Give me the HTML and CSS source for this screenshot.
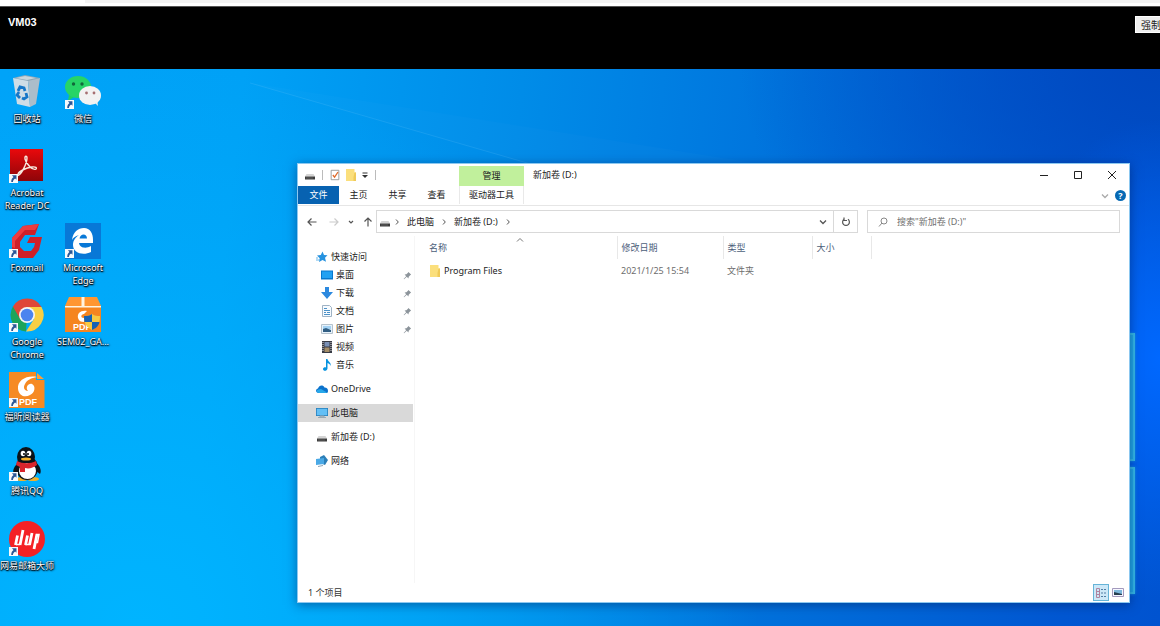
FILE: index.html
```html
<!DOCTYPE html>
<html lang="zh-CN">
<head>
    <meta charset="UTF-8">
    <meta name="viewport" content="width=device-width, initial-scale=1.0">
    <title>VM03</title>
    <link rel="stylesheet" href="styles.css">
</head>
<body>
    <!-- Shared icons -->
    <svg class="sprite" aria-hidden="true">
        <symbol id="drive" viewBox="0 0 12 12">
            <path d="M2.500 5h7L11 7.500H1z" fill="#d4d4d4"/>
            <path d="M1 7.500h10v3H1z" fill="#3c3c3c"/>
            <path d="M2 9h7" stroke="#777" stroke-width=".6"/>
        </symbol>
        <symbol id="folder" viewBox="0 0 12 14">
            <path d="M1 1h8.500v3.500H11V13H1z" fill="#fbdf7c"/>
            <path d="M9.500 4.500H11V13H8.500V9z" fill="#f0ca58"/>
        </symbol>
        <symbol id="pin" viewBox="0 0 10 10">
            <path d="M6 1l3 3-1 .6-1.600 1.700L6 8.300 4.200 6.500 1.200 9.300l-.5-.5L3.500 5.800 1.800 4l2-.4L5.500 2z" fill="#8c949b"/>
        </symbol>
        <symbol id="shortcut" viewBox="0 0 10 10">
            <path d="M0 0h10v10H0z" fill="#f7fafc"/>
            <path d="M3.300 1.500h5v5L6.800 5C5.300 5.900 4.600 7 4.400 8.800H2.500C2.400 6.400 3.300 4.600 5 3.300z" fill="#2b5797"/>
        </symbol>
        <symbol id="next" viewBox="0 0 6 8">
            <path d="M2 1.500L4.300 4 2 6.500" fill="none" stroke="#555"/>
        </symbol>
        <symbol id="down" viewBox="0 0 8 8">
            <path d="M1 2.500L4 5.500l3-3" fill="none" stroke="currentColor" stroke-width="1.300"/>
        </symbol>
    </svg>

    <div class="browser-edge"><span></span></div>
    <header class="vm-bar">
        <h1>VM03</h1>
        <button type="button">强制</button>
    </header>

    <main class="desktop">
        <svg class="beams" viewBox="0 0 1160 558" preserveAspectRatio="none" aria-hidden="true">
            <path d="M250 14L530 95H760z" fill="#fff" opacity=".015"/>
            <path d="M250 14L530 95" stroke="#7fd0ff" opacity=".16"/>
        </svg>
        <div class="light-panes"><i></i><i></i></div>

        <ul class="shortcuts">
            <li class="recycle">
                <svg viewBox="0 0 36 36">
                    <path d="M4 4l12-3 15 3-12 4z" fill="#8ca6b7"/>
                    <path d="M7 4l9-2 11 2-9 2z" fill="#c9d5dc"/>
                    <path d="M4 4l15 3 2 26-13-3z" fill="#cfdde6"/>
                    <path d="M31 4L19 7l2 26 6-3z" fill="#abbdca"/>
                    <path d="M9 17l2-4 4 1 1 3M17 19l1 4-3 2-2-1M11 24l-3-3 2-3" fill="none" stroke="#1677c8" stroke-width="2.800"/>
                </svg>
                <span>回收站</span>
            </li>
            <li class="wechat">
                <svg viewBox="0 0 36 36">
                    <path d="M4 21l-1 6 6-4z" fill="#20cf62"/>
                    <ellipse cx="13" cy="13" rx="13" ry="11" fill="#27d467"/>
                    <circle cx="8.500" cy="10" r="1.700" fill="#12683a"/><circle cx="17" cy="10" r="1.700" fill="#12683a"/>
                    <path d="M29 28l4 4-1-7z" fill="#eee"/>
                    <ellipse cx="25" cy="21.500" rx="11" ry="9.500" fill="#f2f2f2"/>
                    <circle cx="21.500" cy="19" r="1.400" fill="#a66f71"/><circle cx="29" cy="19" r="1.400" fill="#a66f71"/>
                    <use href="#shortcut" x="0" y="26" width="9" height="9"/>
                </svg>
                <span>微信</span>
            </li>
            <li class="acrobat">
                <svg viewBox="0 0 36 36">
                    <defs><linearGradient id="red" x2="0" y2="1"><stop stop-color="#e9090c"/><stop offset="1" stop-color="#8e0509"/></linearGradient></defs>
                    <path d="M1 1h33v32H1z" fill="url(#red)"/>
                    <path d="M9 26c1-3 8-6 14-7 4-.6 5 1 4 2-3 2-10-5-11-10-.7-3 2-4 2-1 0 5-5 15-8 17-1.500 1-2 0-1-1z" fill="none" stroke="#f7e8df" stroke-width="1.400"/>
                    <use href="#shortcut" x="0" y="26" width="9" height="9"/>
                </svg>
                <span>Acrobat Reader DC</span>
            </li>
            <li class="foxmail">
                <svg viewBox="0 0 36 36">
                    <path d="M30 1L26 12H16l-5 7v5l4 4h7l3-4 1-4h-8l3-6h12l-3 13-6 8H10l-7-7V15L14 3z" fill="#ce2029"/>
                    <path d="M30 1L26 7H16L6 18v7l-3-1V15L14 3z" fill="#ec3c40"/>
                    <use href="#shortcut" x="0" y="26" width="9" height="9"/>
                </svg>
                <span>Foxmail</span>
            </li>
            <li class="edge">
                <svg viewBox="0 0 36 36">
                    <path d="M0 0h36v36H0z" fill="#0878d7"/>
                    <path d="M7 17C8 9 13 5 19 5c6 0 9 5 9 12v3H14c.5 5 7 6 12 3v6c-8 4-18 1-18-7 0-5 3-8 6-10-4 1-6 3-7 5zM14.500 15.500H22c0-5-6.500-5.500-7.500 0z" fill="#fff"/>
                    <use href="#shortcut" x="0" y="26" width="9" height="9"/>
                </svg>
                <span>Microsoft Edge</span>
            </li>
            <li class="chrome">
                <svg viewBox="0 0 36 36">
                    <path d="M18 18l-1 16.500A16.500 16.500 0 0 1 3.900 9.500z" fill="#1ca45c"/>
                    <path d="M18 10h14.500a16.500 16.500 0 0 0-28.600-.5l7.200 12.500z" fill="#df4738"/>
                    <path d="M25 22l-8 12.500A16.500 16.500 0 0 0 32.500 10H18z" fill="#f9cf42"/>
                    <circle cx="18" cy="18" r="8" fill="#f5f5f5"/><circle cx="18" cy="18" r="6.300" fill="#4b84ef"/>
                    <use href="#shortcut" x="0" y="26" width="9" height="9"/>
                </svg>
                <span>Google Chrome</span>
            </li>
            <li class="sem">
                <svg viewBox="0 0 36 36">
                    <path d="M4 0h28l4 9H0z" fill="#ff9631"/><path d="M0 10h36v25H0z" fill="#f58520"/>
                    <path d="M0 9h36v1.500H0zM16.500 0h3v9h-3z" fill="#fff3df"/>
                    <path d="M22 14c-6-1-10 2-9 7 1 3 3 4 6 4v-4c-4 0-3-4 0-4z" fill="#fff"/>
                    <text x="8" y="33" class="logo-text">PDF</text>
                    <path d="M27 17c3 2 5 2 8 2 0 7-2 11-8 14-6-3-8-7-8-14 3 0 5 0 8-2z" fill="#f7ca42"/>
                    <path d="M27 17v8h-7.500c-.4-2-.5-4-.5-6 3 0 5 0 8-2zM27 25h7.500c-1 4-3 6-7.500 8z" fill="#1662b4"/>
                </svg>
                <span>SEM02_GA...</span>
            </li>
            <li class="foxit">
                <svg viewBox="0 0 36 36">
                    <path d="M0 0h27v8h8.500v28H0z" fill="#f68a23"/><path d="M28 1l7 6h-7z" fill="#ff9e37"/>
                    <path d="M28 5c-10-2-20 3-19 12 1 7 7 9 12 6 5-2 6-9 2-11-4-1-7 4-4 7-4 0-5-4-3-7 2-4 6-6 12-7z" fill="#fff"/>
                    <text x="10" y="33" class="logo-text">PDF</text>
                    <use href="#shortcut" x="0" y="26" width="9" height="9"/>
                </svg>
                <span>福昕阅读器</span>
            </li>
            <li class="qq">
                <svg viewBox="0 0 36 36">
                    <ellipse cx="13" cy="33" rx="6" ry="2" fill="#eeb02c"/><ellipse cx="24" cy="33" rx="6" ry="2" fill="#eeb02c"/>
                    <path d="M10 16C5 20 3 25 5 28l4-3h18l4 3c2-3 0-9-5-12z" fill="#0b1218"/>
                    <ellipse cx="18" cy="22" rx="11" ry="12" fill="#0b1218"/><ellipse cx="17" cy="11" rx="9" ry="10" fill="#0b1218"/>
                    <ellipse cx="18.500" cy="25" rx="8.500" ry="8" fill="#fff"/>
                    <ellipse cx="14" cy="7.500" rx="2.300" ry="2.800" fill="#fff"/><ellipse cx="20" cy="7.500" rx="2.300" ry="2.800" fill="#fff"/>
                    <circle cx="15" cy="8" r="1"/><circle cx="19" cy="8" r="1"/>
                    <ellipse cx="17" cy="13" rx="5" ry="1.500" fill="#f4b12b"/>
                    <path d="M8 15c6 3 13 3 19 0l1 4c-4 3-8 4-12 3v4h-5v-5l-4-2z" fill="#d9252c"/>
                    <use href="#shortcut" x="0" y="26" width="9" height="9"/>
                </svg>
                <span>腾讯QQ</span>
            </li>
            <li class="netease">
                <svg viewBox="0 0 36 36">
                    <circle cx="18" cy="18" r="18" fill="#f42125"/>
                    <path d="M8.500 14.500L6.500 24M14 9l-3 15M18.500 14.500L16.500 24M23 12l-2.500 12M28 13l-3 15" fill="none" stroke="#fff" stroke-width="2.800"/>
                    <path d="M7 23.500h4M16 23.500h5M27 13.500h3l-1.500 8H26" fill="none" stroke="#fff" stroke-width="1.500"/>
                    <use href="#shortcut" x="0" y="26" width="9" height="9"/>
                </svg>
                <span>网易邮箱大师</span>
            </li>
        </ul>

        <section class="window">
            <div class="title-bar">
                <div class="quick-bar">
                    <svg class="icon"><use href="#drive"/></svg>
                    <i class="divider"></i>
                    <button type="button" aria-label="属性">
                        <svg class="icon" viewBox="0 0 12 14"><path d="M1.500 1.500h9v11h-9z" fill="#fff" stroke="#909090"/><path d="M3.500 7l2 2.500 4-6" fill="none" stroke="#e06a2b" stroke-width="1.500"/></svg>
                    </button>
                    <button type="button" aria-label="新建文件夹"><svg class="icon folder"><use href="#folder"/></svg></button>
                    <button type="button" aria-label="自定义"><svg class="small-icon" viewBox="0 0 8 8"><path d="M1.500 2h5" stroke="#333"/><path d="M1 4h6L4 7z" fill="#333"/></svg></button>
                    <i class="divider"></i>
                </div>
                <span class="tool-title">管理</span>
                <h2>新加卷 (D:)</h2>
                <div class="window-buttons">
                    <button type="button" aria-label="最小化"><svg viewBox="0 0 10 10"><path d="M1 5.500h8"/></svg></button>
                    <button type="button" aria-label="最大化"><svg viewBox="0 0 10 10"><path d="M1.500 1.500h7v7h-7z"/></svg></button>
                    <button type="button" aria-label="关闭"><svg viewBox="0 0 10 10"><path d="M1 1l8 8M9 1L1 9"/></svg></button>
                </div>
            </div>

            <nav class="ribbon">
                <button type="button" class="file-tab">文件</button>
                <button type="button">主页</button>
                <button type="button">共享</button>
                <button type="button">查看</button>
                <button type="button" class="tool-tab">驱动器工具</button>
                <div class="ribbon-end">
                    <button type="button" aria-label="展开功能区"><svg class="small-icon pale"><use href="#down"/></svg></button>
                    <button type="button" class="help" aria-label="帮助">?</button>
                </div>
            </nav>

            <div class="address-row">
                <div class="history">
                    <button type="button" aria-label="后退"><svg viewBox="0 0 10 10"><path d="M9.500 5H1M4.500 1.500L1 5l3.500 3.500"/></svg></button>
                    <button type="button" class="disabled" aria-label="前进"><svg viewBox="0 0 10 10"><path d="M.5 5H9M5.500 1.500L9 5 5.500 8.500"/></svg></button>
                    <button type="button" class="recent" aria-label="最近"><svg viewBox="0 0 10 10"><path d="M3 4l2 2 2-2"/></svg></button>
                    <button type="button" class="up" aria-label="向上"><svg viewBox="0 0 10 10"><path d="M5 9.500V1M1.500 4.500L5 1l3.500 3.500"/></svg></button>
                </div>
                <div class="address">
                    <svg class="icon"><use href="#drive"/></svg>
                    <svg class="crumb"><use href="#next"/></svg>
                    <a href="#">此电脑</a>
                    <svg class="crumb"><use href="#next"/></svg>
                    <a href="#">新加卷 (D:)</a>
                    <svg class="crumb"><use href="#next"/></svg>
                    <button type="button" class="open-list" aria-label="历史"><svg class="small-icon"><use href="#down"/></svg></button>
                    <button type="button" class="refresh" aria-label="刷新"><svg viewBox="0 0 10 10"><path d="M3 2.300a3.400 3.400 0 1 0 4 0M3 .5v3h3"/></svg></button>
                </div>
                <label class="search">
                    <svg viewBox="0 0 10 10"><circle cx="6" cy="4" r="3"/><path d="M4 6L1 9.500"/></svg>
                    <input type="text" placeholder='搜索"新加卷 (D:)"' aria-label="搜索">
                </label>
            </div>

            <div class="explorer">
                <aside>
                    <ul>
                        <li><svg class="icon" viewBox="0 0 12 12"><path d="M6.500.5L8 4l3.500.2L9 6.700l1 4L6.500 9 3 11l.7-3.800L1 4.500l3.800-.4z" fill="#2692df"/><path d="M0 9h4M0 7h2" stroke="#64b5ea"/></svg>快速访问</li>
                        <li class="sub"><svg class="icon" viewBox="0 0 12 12"><path d="M0 1.500h12v9H0z" fill="#0878ce"/><path d="M1 2.500h10v6.500H1z" fill="#22a1f2"/></svg>桌面<svg class="pin"><use href="#pin"/></svg></li>
                        <li class="sub"><svg class="icon" viewBox="0 0 12 12"><path d="M4 0h4v5h4l-6 7-6-7h4z" fill="#2c89df"/></svg>下载<svg class="pin"><use href="#pin"/></svg></li>
                        <li class="sub"><svg class="icon" viewBox="0 0 12 12"><path d="M1.500.5h7l2 2v9h-9z" fill="#f7fbff" stroke="#9fb3c5"/><path d="M3 3.500h3M3 5.500h6M3 7.500h2M6 7.500h3M3 9.500h6" stroke="#4c91c7"/></svg>文档<svg class="pin"><use href="#pin"/></svg></li>
                        <li class="sub"><svg class="icon" viewBox="0 0 12 12"><path d="M.5 1.500h11v9H.5z" fill="#e7f2fb" stroke="#b5c2cc"/><path d="M2 3h8v3H2z" fill="#a3d2f4"/><path d="M2 6l3-1 5 2v2H2z" fill="#315e83"/></svg>图片<svg class="pin"><use href="#pin"/></svg></li>
                        <li class="sub"><svg class="icon" viewBox="0 0 12 12"><path d="M1 0h10v12H1z" fill="#383b45"/><path d="M3.500 1h5v4.500h-5z" fill="#7990b6"/><path d="M3.500 6.500h5V11h-5z" fill="#a38d68"/><path d="M2 1v10M10 1v10" stroke="#ddd" stroke-dasharray="1 1"/></svg>视频</li>
                        <li class="sub"><svg class="icon" viewBox="0 0 12 12"><path d="M5 0h1.500c.3 3 4 3 3 7-.5-2-1.500-2.500-3-3v5.500c-.5 3-4.500 3-4.500.5C2 8.500 4 8 5 8.500z" fill="#0793df"/></svg>音乐</li>
                        <li class="root"><svg class="icon" viewBox="0 0 12 12"><path d="M3 10C-1 10-.5 6 2 5.500 3 2 7 1.500 8.500 4.500 11 4.500 12 6 12 8s-1 2-2 2z" fill="#0c72cc"/><path d="M3 10c-3 0-3-3-.5-3.500L5 6l6 3.500-1 .5z" fill="#28a8ea"/></svg>OneDrive</li>
                        <li class="root selected"><svg class="icon" viewBox="0 0 12 12"><path d="M0 1h12v8H0z" fill="#2780be"/><path d="M.8 1.800h10.400v6.400H.8z" fill="#63bff5"/><path d="M2 10.500h8M4 9h4v1H4z" stroke="#9aa9b3" fill="#c4cdd3"/></svg>此电脑</li>
                        <li class="root"><svg class="icon"><use href="#drive"/></svg>新加卷 (D:)</li>
                        <li class="root"><svg class="icon" viewBox="0 0 12 12"><path d="M4 2l4-2 4 5-3 5-5-2z" fill="#2c7fb8"/><path d="M0 4l8-1v6l-8 1z" fill="#4aa9e6"/><path d="M2 11.500l5-1" stroke="#8aa1b2"/></svg>网络</li>
                    </ul>
                </aside>
                <div class="files">
                    <table>
                        <thead>
                            <tr>
                                <th class="name">名称<svg class="sort" viewBox="0 0 8 8"><path d="M1 5.500l3-3 3 3" fill="none" stroke="#777"/></svg></th>
                                <th class="date">修改日期</th>
                                <th class="type">类型</th>
                                <th class="size">大小</th>
                                <th></th>
                            </tr>
                        </thead>
                        <tbody>
                            <tr>
                                <td class="name"><a href="#"><svg class="icon folder"><use href="#folder"/></svg>Program Files</a></td>
                                <td>2021/1/25 15:54</td>
                                <td>文件夹</td>
                                <td></td>
                                <td></td>
                            </tr>
                        </tbody>
                    </table>
                </div>
            </div>

            <footer class="status">
                <span>1 个项目</span>
                <div class="views">
                    <button type="button" class="active" aria-label="详细信息"><svg viewBox="0 0 12 12"><path d="M1.500 1.500h3v9h-3zM1.500 4.500h3M1.500 7.500h3" fill="none" stroke="#b084a0"/><path d="M6 2.500h2M9 2.500h2M6 6h2M9 6h2M6 9.500h2M9 9.500h2" stroke="#527da3"/></svg></button>
                    <button type="button" aria-label="大图标"><svg viewBox="0 0 12 12"><path d="M.5 1.500h11v8H.5z" fill="#f6f6ff" stroke="#a39abd"/><path d="M2 3h8v5H2z" fill="#7cb8dc"/><path d="M2 5l4 1 4 1v1H2z" fill="#263e4f"/></svg></button>
                </div>
            </footer>
        </section>
    </main>
</body>
</html>
```
FILE: styles.css
```css
* { box-sizing: border-box; }
body {
    margin: 0;
    height: 100vh;
    display: flex;
    flex-direction: column;
    overflow: hidden;
    font: 9px/18px "Noto Sans", "Noto Sans CJK SC", sans-serif;
    color: #222;
}
ul { list-style: none; margin: 0; padding: 0; }
button { border: 0; padding: 0; background: none; font: inherit; color: inherit; }
a { color: inherit; text-decoration: none; }
svg { display: block; flex: none; }
.sprite { position: absolute; width: 0; height: 0; }

/* Top of the page */
.browser-edge { height: 6px; background: #fff; }
.browser-edge span { display: block; height: 3px; margin-left: 85px; background: #f3f3f3; }
.vm-bar {
    flex: none;
    height: 63px;
    padding: 9px 0 0 8px;
    display: flex;
    justify-content: space-between;
    align-items: flex-start;
    background: #000;
    border-top: 1px solid #555;
}
.vm-bar h1 { margin: 0; font: bold 11px/12px "Liberation Sans", Arial, sans-serif; color: #fff; }
.vm-bar button {
    height: 17px;
    margin-right: -7px;
    padding: 0 5px;
    background: #efefef;
    border: 1px solid #fff;
    font-size: 10px;
    line-height: 14px;
}

/* Desktop */
.desktop {
    position: relative;
    flex: 1;
    min-height: 0;
    padding: 5px 0 31px;
    background:
        radial-gradient(ellipse 160px 240px at 100% 52%, #0068ff 0%, rgba(0, 104, 255, 0) 100%),
        radial-gradient(ellipse 420px 260px at 100% 0%, #0048bf 0%, rgba(0, 72, 191, 0) 100%),
        radial-gradient(ellipse 620px 560px at 12% 100%, #00b4ff 0%, rgba(0, 180, 255, 0) 100%),
        linear-gradient(96deg, #00a3f8 0%, #00a1f6 20%, #008ce8 43%, #0072dc 66%, #0057d2 92%, #0053d0 100%);
}
.beams { position: absolute; inset: 0; width: 100%; height: 100%; }
.light-panes {
    position: absolute;
    right: 25px;
    top: 264px;
    bottom: 32px;
    width: 60px;
    display: grid;
    gap: 6px;
}
.light-panes i { background: #21a8e5; border: 2px solid #35bbe8; box-shadow: 0 0 3px #169be6; }

.shortcuts {
    position: relative;
    height: 100%;
    display: grid;
    grid-template-columns: 54px 58px;
    grid-template-rows: repeat(7, 1fr);
}
.shortcuts li {
    grid-column: 1;
    display: flex;
    flex-direction: column;
    align-items: center;
    gap: 2px;
    text-align: center;
    line-height: 13px;
    color: #fff;
    text-shadow: 0 1px 1px #000, 1px 1px 2px #000, 0 0 2px #003;
}
.shortcuts li svg { width: 36px; height: 36px; }
.shortcuts .recycle { grid-row: 1; }
.shortcuts .wechat { grid-area: 1 / 2; }
.shortcuts .acrobat { grid-row: 2; }
.shortcuts .foxmail { grid-row: 3; }
.shortcuts .edge { grid-area: 3 / 2; }
.shortcuts .chrome { grid-row: 4; }
.shortcuts .sem { grid-area: 4 / 2; }
.shortcuts .foxit { grid-row: 5; }
.shortcuts .qq { grid-row: 6; }
.shortcuts .netease { grid-row: 7; }
.logo-text { font: bold 9px "Liberation Sans", Arial, sans-serif; fill: #fff; text-shadow: none; }

/* Explorer window */
.window {
    position: absolute;
    left: 297px;
    right: 30px;
    top: 94px;
    bottom: 23px;
    display: flex;
    flex-direction: column;
    background: #fff;
    border: 1px solid #8cc8f0;
    box-shadow: 0 2px 10px rgba(0, 30, 90, 0.5);
}
.icon { width: 12px; height: 12px; }
.icon.folder { height: 14px; }
.small-icon { width: 8px; height: 8px; }
.title-bar { display: flex; height: 22px; }
.quick-bar { display: flex; align-items: center; gap: 4px; width: 161px; padding-left: 6px; }
.divider { width: 1px; height: 10px; margin: 0 2px; background: #bbb; }
.tool-title { width: 65px; margin-top: 2px; background: #c1f09c; text-align: center; line-height: 20px; }
.title-bar h2 { flex: 1; margin: 0; padding-left: 9px; font-size: 9px; line-height: 22px; font-weight: normal; }
.window-buttons { display: flex; }
.window-buttons button { width: 34px; display: grid; place-items: center; }
.window-buttons svg { width: 10px; height: 10px; fill: none; stroke: #222; }

.ribbon { display: flex; height: 20px; border-bottom: 1px solid #e6e6e6; }
.ribbon button { width: 39px; height: 18px; }
.ribbon .file-tab { width: 41px; background: #0762b1; color: #fff; }
.ribbon .tool-tab { width: 65px; margin-left: 3px; border: solid #e9e9e9; border-width: 0 1px; }
.ribbon-end { display: flex; align-items: center; gap: 6px; margin-left: auto; padding-right: 3px; }
.ribbon .ribbon-end button { width: auto; height: auto; }
.ribbon .ribbon-end .help { width: 11px; height: 11px; border-radius: 50%; background: #0769b4; color: #fff; font-weight: bold; line-height: 11px; }
.pale { color: #aaa; }

.address-row { display: flex; padding: 4px 9px 3px 0; height: 30px; }
.history { display: flex; align-items: center; width: 78px; padding-left: 9px; gap: 12px; }
.history svg, .search svg, .refresh svg { width: 10px; height: 10px; fill: none; stroke: #555; stroke-width: 1.2; }
.history .disabled { opacity: 0.3; }
.history .recent { margin: 0 -5px; }
.address { flex: 1; display: flex; align-items: center; border: 1px solid #d9d9d9; padding-left: 2px; }
.address a { margin: 0 4px; }
.crumb { width: 6px; height: 8px; margin: 0 3px; }
.address .open-list { margin: 0 6px 0 auto; color: #555; }
.address .refresh { width: 24px; height: 100%; display: grid; place-items: center; border-left: 1px solid #d9d9d9; }
.search { width: 253px; margin-left: 9px; padding-left: 10px; display: flex; align-items: center; gap: 9px; border: 1px solid #d9d9d9; }
.search svg { stroke: #888; stroke-width: 1; }
.search input { flex: 1; min-width: 0; border: 0; padding: 0; outline: 0; background: none; font: inherit; }
.search input::placeholder { color: #707070; opacity: 1; }

.explorer { flex: 1; min-height: 0; display: flex; }
aside { width: 117px; padding: 12px 1px 0 0; border-right: 1px solid #f6f6f6; }
aside li { display: flex; align-items: center; gap: 3px; height: 18px; padding-left: 18px; }
aside .sub { padding-left: 23px; }
aside .root { margin-top: 6px; }
aside .selected { background: #d9d9d9; }
.pin { width: 9px; height: 9px; margin: 0 1px 0 auto; }
.files { flex: 1; }
table { width: 100%; table-layout: fixed; border-collapse: collapse; }
th { position: relative; height: 23px; padding: 0 0 0 4px; border-right: 1px solid #e8e8e8; text-align: left; font-weight: normal; color: #4c607a; }
th:last-child { border: 0; }
td { height: 24px; padding: 0 0 0 4px; color: #6d6d6d; }
th.name, td.name { width: 202px; padding-left: 14px; }
td.name a { display: flex; align-items: center; gap: 3px; color: #222; }
.date { width: 106px; }
.type { width: 89px; }
.size { width: 59px; }
.sort { position: absolute; top: 0; left: 50%; width: 8px; height: 8px; }

.status { display: flex; justify-content: space-between; align-items: center; height: 19px; padding: 0 3px 0 10px; color: #333; }
.views { display: flex; gap: 1px; }
.views button { width: 16px; height: 17px; display: grid; place-items: center; border: 1px solid transparent; }
.views .active { background: #cce8f8; border-color: #66b4d8; }
.views svg { width: 12px; height: 12px; }
```
